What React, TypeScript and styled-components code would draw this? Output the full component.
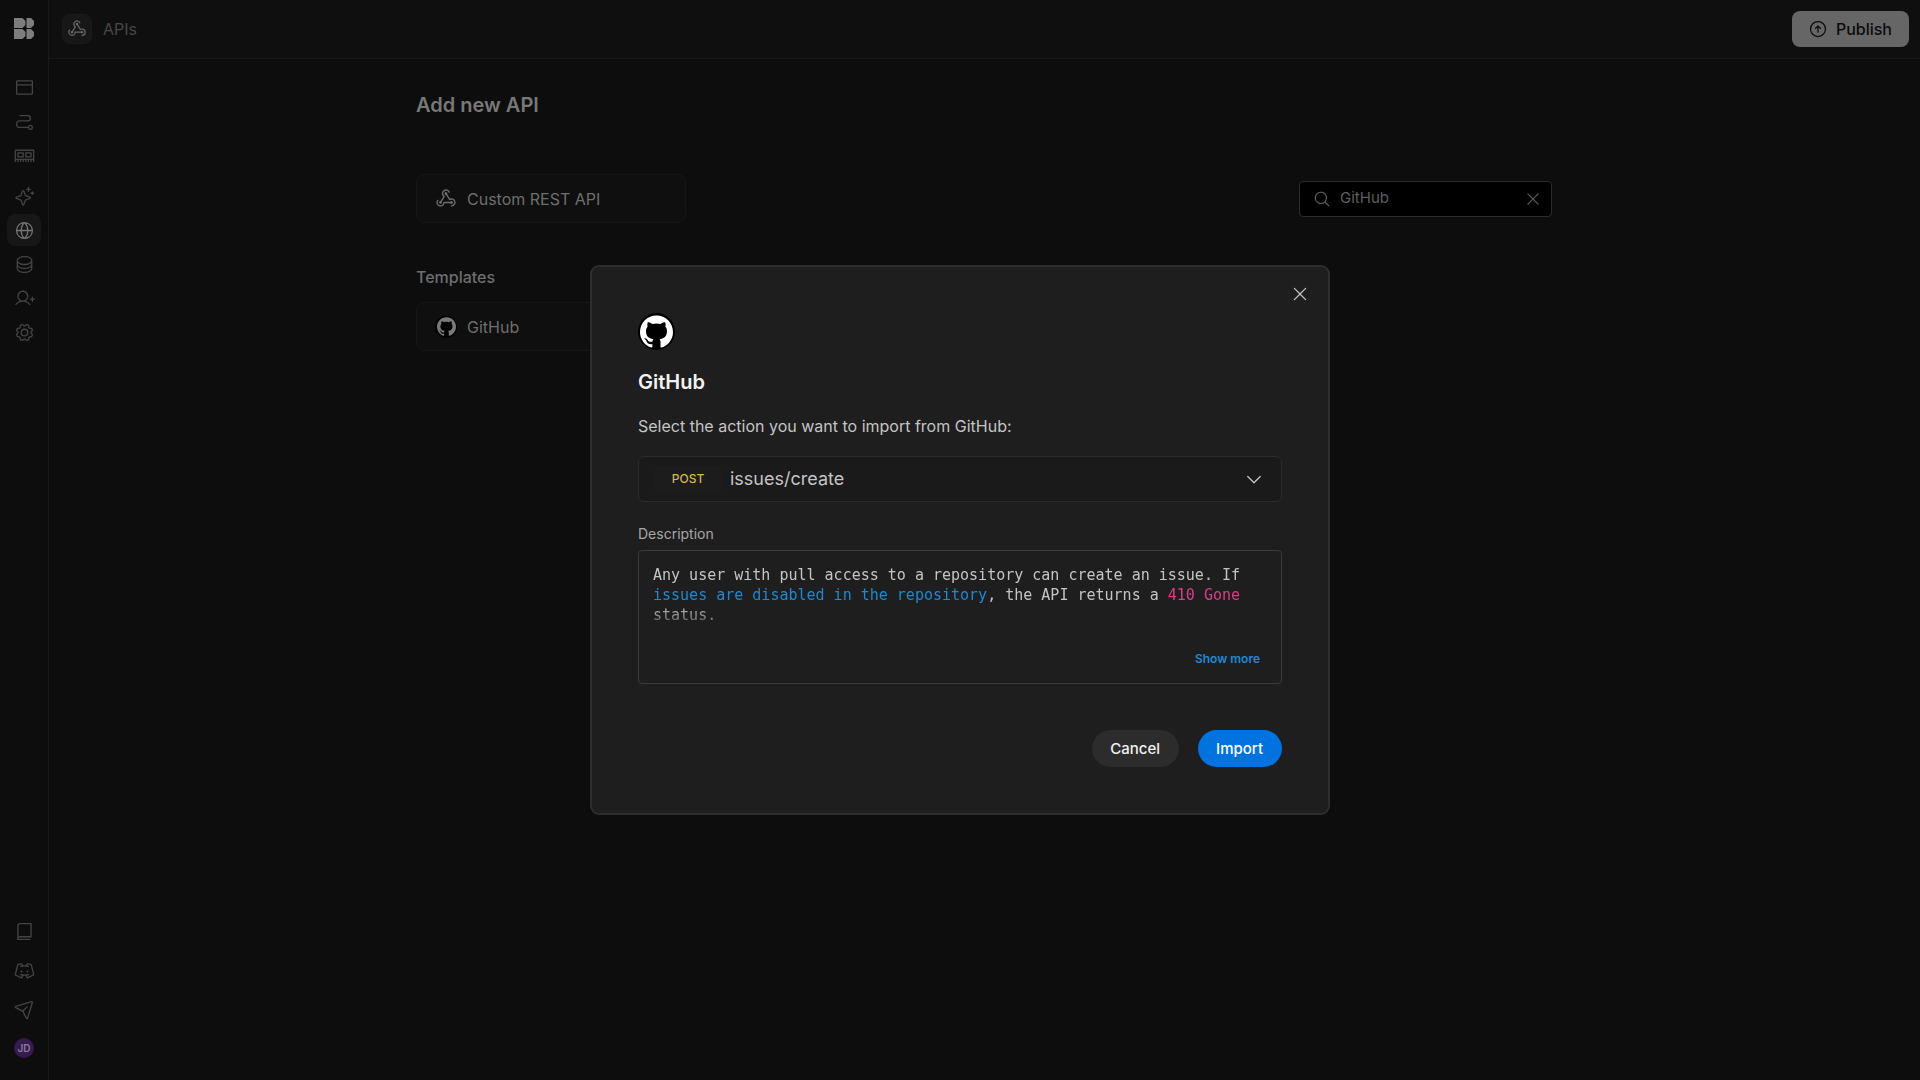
import React, { useState } from "react";
import styled, { createGlobalStyle } from "styled-components";
import {
  PiArrowCircleUp,
  PiBook,
  PiBrowser,
  PiCaretDown,
  PiDatabase,
  PiDiscordLogo,
  PiGear,
  PiGlobeSimple,
  PiMagnifyingGlass,
  PiMemory,
  PiPaperPlaneTilt,
  PiPath,
  PiSparkle,
  PiUserPlus,
  PiWebhooksLogo,
  PiX,
} from "react-icons/pi";
import { SiGithub } from "react-icons/si";

const GlobalStyle = createGlobalStyle`
  * { box-sizing: border-box; }
  body {
    margin: 0;
    background: #0d0d0d;
    font-family: Inter, "Liberation Sans", sans-serif;
    font-size: 16px;
    line-height: 20px;
    color: #737373;
  }
  button, input, select { font: inherit; color: inherit; }
  h1, h2, h3, p { margin: 0; }
`;

const Shell = styled.div`
  display: flex;
  min-height: 100vh;
`;

const Sidebar = styled.nav`
  flex: none;
  width: 49px;
  display: flex;
  flex-direction: column;
  justify-content: space-between;
  align-items: center;
  padding: 18px 0 22px;
  border-right: 1px solid #191919;
  background: #0d0d0d;
`;

const NavGroup = styled.div<{ $gap: number }>`
  display: flex;
  flex-direction: column;
  align-items: center;
  gap: ${(p) => p.$gap}px;
`;

const LogoLink = styled.a`
  display: flex;
  margin-bottom: 30px;
`;

const NavLink = styled.a<{ $active?: boolean }>`
  display: flex;
  align-items: center;
  justify-content: center;
  width: 34px;
  height: 32px;
  border-radius: 8px;
  color: ${(p) => (p.$active ? "#757575" : "#444444")};
  background: ${(p) => (p.$active ? "#171717" : "transparent")};
`;

const NavDivider = styled.div`
  height: 5px;
`;

const HelpLink = styled(NavLink)`
  height: 20px;
`;

const Avatar = styled.button`
  width: 20px;
  height: 20px;
  padding: 0;
  border: 0;
  border-radius: 50%;
  background: #361b4f;
  color: #8b7c98;
  font-size: 10px;
  font-weight: 600;
  line-height: 20px;
`;

const Page = styled.div`
  flex: 1;
  min-width: 0;
`;

const TopBar = styled.header`
  display: flex;
  align-items: center;
  justify-content: space-between;
  height: 59px;
  padding: 0 11px 0 13px;
  border-bottom: 1px solid #191919;
  background: #0f0f0f;
`;

const Crumb = styled.div`
  display: flex;
  align-items: center;
  gap: 11px;
  color: #474747;
`;

const CrumbIcon = styled.span`
  display: flex;
  align-items: center;
  justify-content: center;
  width: 30px;
  height: 30px;
  border: 1px solid #1b1b1b;
  border-radius: 8px;
  background: #171717;
  color: #696969;
`;

const PublishButton = styled.button`
  display: flex;
  align-items: center;
  gap: 8px;
  height: 36px;
  padding: 0 17px 0 16px;
  border: 0;
  border-radius: 8px;
  background: #666666;
  color: #0b0b0b;
  font-weight: 500;
`;

const Content = styled.main`
  max-width: 1137px;
  margin: 0 auto;
  padding: 34px 1px 0 0;
`;

const PageTitle = styled.h1`
  font-size: 20px;
  line-height: 24px;
  font-weight: 600;
  color: #787878;
`;

const Tools = styled.div`
  display: flex;
  align-items: center;
  justify-content: space-between;
  margin-top: 57px;
`;

const ApiCard = styled.button`
  display: flex;
  align-items: center;
  gap: 10px;
  width: 270px;
  height: 49px;
  padding: 0 18px;
  border: 1px solid #161616;
  border-radius: 8px;
  background: #0f0f0f;
  color: #6e6e6e;
`;

const SearchBox = styled.label`
  display: flex;
  align-items: center;
  width: 253px;
  height: 36px;
  padding: 0 9px 0 13px;
  border: 1px solid #2b2b2b;
  border-radius: 4px;
  background: #000000;
  color: #5e5e5e;
`;

const SearchInput = styled.input`
  flex: 1;
  min-width: 0;
  margin: 0 0 2px 9px;
  padding: 0;
  border: 0;
  outline: 0;
  background: transparent;
  font-size: 15px;
`;

const IconButton = styled.button`
  display: flex;
  padding: 0;
  border: 0;
  background: transparent;
  color: inherit;
`;

const SectionTitle = styled.h2`
  margin: 44px 0 15px;
  font-size: 16px;
  line-height: 20px;
  font-weight: 500;
  color: #6e6e6e;
`;

const Backdrop = styled.div`
  position: fixed;
  inset: 0;
  display: flex;
  align-items: center;
  justify-content: center;
`;

const Modal = styled.section`
  position: relative;
  width: 740px;
  padding: 46px;
  border: 2px solid #2d2d2d;
  border-radius: 9px;
  background: #1e1e1e;
  color: #c4c4c4;
`;

const CloseButton = styled(IconButton)`
  position: absolute;
  top: 17px;
  right: 18px;
`;

const ModalTitle = styled.h2`
  margin-top: 20px;
  font-size: 20px;
  line-height: 24px;
  font-weight: 600;
  color: #f2f2f2;
`;

const Prompt = styled.p`
  margin: 22px 0 20px;
`;

const ActionField = styled.div`
  display: flex;
  align-items: center;
  height: 46px;
  padding: 0 17px 0 15px;
  border: 1px solid #2b2b2b;
  border-radius: 6px;
  background: #1a1a1a;
`;

const MethodBadge = styled.span`
  width: 68px;
  border-radius: 4px;
  background: #1c1c1c;
  color: #d0b84c;
  font-size: 12px;
  font-weight: 500;
  line-height: 26px;
  text-align: center;
`;

const ActionSelect = styled.select`
  flex: 1;
  height: 44px;
  margin: 0 -20px 0 8px;
  padding: 0;
  border: 0;
  outline: 0;
  appearance: none;
  background: transparent;
  font-size: 18px;
`;

const FieldCaret = styled(PiCaretDown)`
  pointer-events: none;
`;

const FieldLabel = styled.h3`
  margin: 22px 0 6px;
  font-size: 14px;
  line-height: 20px;
  font-weight: 400;
  color: #a6a6a6;
`;

const Description = styled.div`
  display: flex;
  flex-direction: column;
  gap: 20px;
  padding: 14px 21px 15px 14px;
  border: 1px solid #3b3b3b;
  border-radius: 4px;
`;

const DescriptionText = styled.p`
  height: 65px;
  overflow: hidden;
  font-family: "DejaVu Sans Mono", monospace;
  font-size: 15px;
  line-height: 20px;
  mask-image: linear-gradient(#000 40px, transparent 70px);
`;

const DocLink = styled.a`
  color: #1b8ad3;
  text-decoration: none;
`;

const StatusCode = styled.code`
  color: #dc3c88;
  font-family: inherit;
`;

const ShowMore = styled.button`
  align-self: flex-end;
  padding: 0;
  border: 0;
  background: transparent;
  color: #1b8ad3;
  font-size: 12px;
  font-weight: 600;
  line-height: 18px;
`;

const Actions = styled.div`
  display: flex;
  justify-content: flex-end;
  gap: 19px;
  margin-top: 46px;
`;

const PillButton = styled.button<{ $primary?: boolean }>`
  height: 37px;
  padding: 0 19px 0 18px;
  border: 0;
  border-radius: 19px;
  background: ${(p) => (p.$primary ? "#0073e0" : "#2c2c2c")};
  color: ${(p) => (p.$primary ? "#ffffff" : "#f2f2f2")};
  font-size: 15px;
  font-weight: 500;
`;

const GithubDisc = styled.span<{ $size: number; $tone: string }>`
  display: flex;
  align-items: center;
  justify-content: center;
  width: ${(p) => p.$size}px;
  height: ${(p) => p.$size}px;
  border-radius: 50%;
  background: #000000;
  color: ${(p) => p.$tone};
`;

const BudibaseLogo = () => (
  <svg width="20" height="21" viewBox="0 0 20 21" fill="#7d7d7d" aria-hidden="true">
    <path d="M0 0H8.500L11.500 3V7L8.500 10H0Z" />
    <path d="M12.500 0H17L20 3V7L17 10H12.500Z" />
    <path d="M0 11H8.500L11.500 14V18L8.500 21H0Z" />
    <path d="M12.500 11H17L20 14V18L17 21H12.500Z" />
  </svg>
);

const topNav = [
  { label: "Design", Icon: PiBrowser },
  { label: "Automations", Icon: PiPath },
  { label: "Connections", Icon: PiMemory },
];

const toolNav = [
  { label: "AI", Icon: PiSparkle },
  { label: "APIs", Icon: PiGlobeSimple, active: true },
  { label: "Data", Icon: PiDatabase },
  { label: "Users", Icon: PiUserPlus },
  { label: "Settings", Icon: PiGear },
];

const helpNav = [
  { label: "Documentation", Icon: PiBook },
  { label: "Discord", Icon: PiDiscordLogo },
  { label: "Feedback", Icon: PiPaperPlaneTilt },
];

export default function App() {
  const [query, setQuery] = useState("GitHub");

  return (
    <>
      <GlobalStyle />
      <Shell>
        <Sidebar>
          <NavGroup $gap={2}>
            <LogoLink href="#home" aria-label="Home">
              <BudibaseLogo />
            </LogoLink>
            {topNav.map(({ label, Icon }) => (
              <NavLink key={label} href="#" aria-label={label}>
                <Icon size={21} />
              </NavLink>
            ))}
            <NavDivider />
            {toolNav.map(({ label, Icon, active }) => (
              <NavLink key={label} href="#" aria-label={label} $active={active}>
                <Icon size={21} />
              </NavLink>
            ))}
          </NavGroup>
          <NavGroup $gap={19}>
            {helpNav.map(({ label, Icon }) => (
              <HelpLink key={label} href="#" aria-label={label}>
                <Icon size={21} />
              </HelpLink>
            ))}
            <Avatar>JD</Avatar>
          </NavGroup>
        </Sidebar>
        <Page>
          <TopBar>
            <Crumb>
              <CrumbIcon>
                <PiWebhooksLogo size={20} />
              </CrumbIcon>
              APIs
            </Crumb>
            <PublishButton>
              <PiArrowCircleUp size={20} />
              Publish
            </PublishButton>
          </TopBar>
          <Content>
            <PageTitle>Add new API</PageTitle>
            <Tools>
              <ApiCard>
                <PiWebhooksLogo size={22} />
                Custom REST API
              </ApiCard>
              <SearchBox>
                <PiMagnifyingGlass size={18} />
                <SearchInput
                  aria-label="Search templates"
                  value={query}
                  onChange={(e) => setQuery(e.target.value)}
                />
                <IconButton aria-label="Clear search" onClick={() => setQuery("")}>
                  <PiX size={18} />
                </IconButton>
              </SearchBox>
            </Tools>
            <SectionTitle>Templates</SectionTitle>
            <ApiCard>
              <GithubDisc $size={22} $tone="#7a7a7a">
                <SiGithub size={19} />
              </GithubDisc>
              GitHub
            </ApiCard>
          </Content>
        </Page>
      </Shell>
      <Backdrop>
        <Modal role="dialog" aria-modal="true" aria-labelledby="modal-title">
          <CloseButton aria-label="Close">
            <PiX size={20} />
          </CloseButton>
          <GithubDisc $size={37} $tone="#ffffff">
            <SiGithub size={33} />
          </GithubDisc>
          <ModalTitle id="modal-title">GitHub</ModalTitle>
          <Prompt>Select the action you want to import from GitHub:</Prompt>
          <ActionField>
            <MethodBadge>POST</MethodBadge>
            <ActionSelect aria-label="Action" defaultValue="issues/create">
              <option>issues/create</option>
            </ActionSelect>
            <FieldCaret size={20} />
          </ActionField>
          <FieldLabel>Description</FieldLabel>
          <Description>
            <DescriptionText>
              Any user with pull access to a repository can create an issue. If{" "}
              <DocLink href="#docs">issues are disabled in the repository</DocLink>, the API
              returns a <StatusCode>410 Gone</StatusCode> status.
            </DescriptionText>
            <ShowMore>Show more</ShowMore>
          </Description>
          <Actions>
            <PillButton>Cancel</PillButton>
            <PillButton $primary>Import</PillButton>
          </Actions>
        </Modal>
      </Backdrop>
    </>
  );
}
